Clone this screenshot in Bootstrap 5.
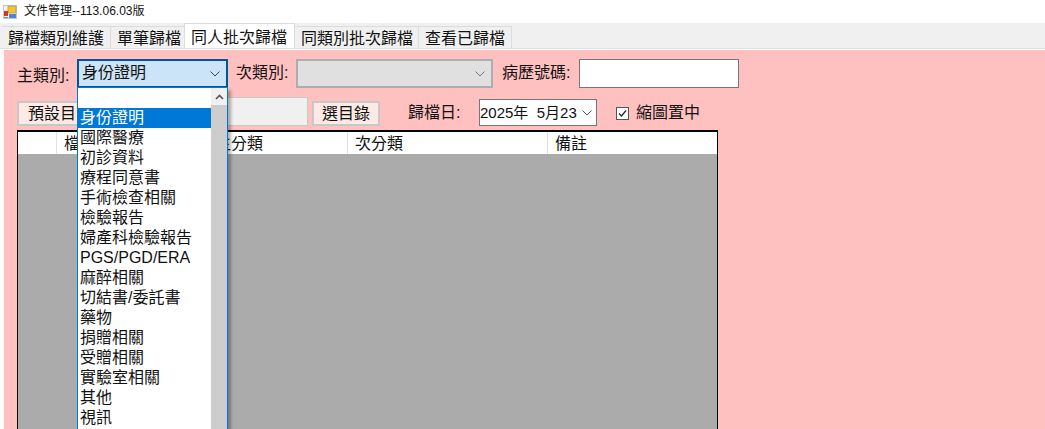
<!DOCTYPE html>
<html lang="zh-Hant"><head><meta charset="utf-8"><title>文件管理</title>
<link href="https://cdn.jsdelivr.net/npm/bootstrap@5.3.0/dist/css/bootstrap.min.css" rel="stylesheet">
<style>
html,body{width:1045px;height:429px;overflow:hidden;background:#fff}
body{font-family:"Liberation Sans","Noto Sans CJK TC",sans-serif;font-size:16px;color:#111;line-height:20px;position:relative}
.win-title{height:23px;padding-left:3px;font-size:12px;gap:7px;line-height:23px}
.tab-strip{height:26px;background:#f0f0f0;padding-left:2px;border-bottom:1px solid #e2e2e2}
.tab-x{height:22px;margin-top:3px;padding:0 6px 0 6px;font-size:16px;line-height:24px;border:1px solid #dcdcdc;border-bottom:0;border-left:0;white-space:nowrap;background:#f0f0f0}
.tab-x.on{height:25px;margin-top:0;margin-left:-4px;background:#fff;padding:3px 7px 0 6px;line-height:21px;border-left:1px solid #dcdcdc;position:relative}
.tab-n{padding-right:5px}
.pane-x{margin-left:4px;height:380px;background:#ffc0c0;padding-left:13px;border-top:1px solid #fff}
.r1{height:29px;margin-top:9px}
.lbl{white-space:nowrap}
.lbl-a{width:51px;line-height:34px}
.lbl-b{width:52px;margin-left:8px;line-height:27px}
.lbl-c{width:68px;line-height:28px}
.combo{height:29px;border:1px solid #7a7a7a;position:relative;padding-left:4px;font-size:16px}
.combo.focus{width:151px;margin-left:9px;background:#cce4f7;border:2px solid #005499;line-height:24px;padding-left:3px}
.combo.off{width:197px;margin:0 9px 0 8px;background:#e0e0e0;border:2px solid #adadad}
.chev{position:absolute;right:6px;top:50%;margin-top:-3px}
.inp{width:160px;height:29px;margin-left:9px;background:#fff;border:1px solid #767676}
.r2{height:29px;margin-top:9px}
.btn-x{height:25px;margin-top:4px;background:#fdeae6;border:2px solid #c8c8c8;border-radius:0;padding:0;font-size:16px;line-height:18px;color:#111;text-align:center}
.b1{width:70px}
.tbx{width:221px;height:29px;background:#f0f0f0;border:1px solid #c8c8c8}
.b2{width:68px;margin-left:4px}
.date-l{margin-left:28px;width:71px;line-height:32px}
.date-x{width:118px;height:27px;margin-top:2px;background:#fff;border:1px solid #767676;font-size:15px;line-height:26px;padding-left:0;position:relative;white-space:pre}
.date-x .chev{right:4px}
.chk{margin-left:19px;width:13px;height:13px;border:1px solid #555;background:#fff;margin-top:10px}
.chk-l{margin-left:7px;font-size:16px;line-height:32px;color:#111}
.dgrid{margin-top:4px;width:701px;height:300px;border:2px solid #000;border-left-width:1px;border-right-width:1px;border-bottom:0;background:#ababab}
.dhead{height:22px;background:#fff;font-size:16px;line-height:24px}
.dc{border-right:1px solid #e0e0e0;padding-left:7px;white-space:nowrap}
.dropx{position:absolute;left:77px;top:87px;width:151px;height:345px;background:#fff;border:1px solid #0078d7;border-bottom:0;font-size:16px;display:flex;box-shadow:3px 3px 3px rgba(0,0,0,.3)}
.dlist{width:133px}
.ditem{height:20px;line-height:20px;padding-left:2px;white-space:nowrap;color:#111}
.ditem.sel{background:#0078d7;color:#fff}
.dscroll{width:16px;background:#cdcdcd}
.dup{height:17px;background:#f0f0f0;display:flex;align-items:center;justify-content:center}
</style></head>
<body>
<div class="win-title d-flex align-items-center">
<svg width="14" height="14" viewBox="0 0 14 14"><rect x=".5" y=".5" width="13" height="13" fill="#f4f0e4" stroke="#c8c8c8"/><rect x="5" y="1" width="8" height="7" fill="#f2c438" stroke="#b08a30" stroke-width=".6"/><rect x="1" y="6" width="4" height="5" fill="#d8352a"/><rect x="6" y="9" width="7" height="4" fill="#4a86e0"/><rect x="1" y="12" width="4" height="1" fill="#888"/></svg>
<span>文件管理--113.06.03版</span></div>
<div class="tab-strip d-flex">
<div class="tab-x">歸檔類別維護</div><div class="tab-x">單筆歸檔</div><div class="tab-x on">同人批次歸檔</div><div class="tab-x tab-n">同類別批次歸檔</div><div class="tab-x">查看已歸檔</div>
</div>
<div class="pane-x">
<div class="r1 d-flex">
<span class="lbl lbl-a">主類別:</span>
<div class="combo focus">身份證明<svg class="chev" width="10" height="6" viewBox="0 0 10 6"><path d="M.5.5 5 5 9.5.5" fill="none" stroke="#444"/></svg></div>
<span class="lbl lbl-b">次類別:</span>
<div class="combo off"><svg class="chev" width="10" height="6" viewBox="0 0 10 6"><path d="M.5.5 5 5 9.5.5" fill="none" stroke="#777"/></svg></div>
<span class="lbl lbl-c">病歷號碼:</span>
<div class="inp"></div>
</div>
<div class="r2 d-flex">
<button class="btn-x b1" type="button">預設目</button>
<div class="tbx"></div>
<button class="btn-x b2" type="button">選目錄</button>
<span class="date-l">歸檔日:</span>
<div class="date-x">2025年  5月23<svg class="chev" width="10" height="6" viewBox="0 0 10 6"><path d="M.5.5 5 5 9.5.5" fill="none" stroke="#555"/></svg></div>
<div class="chk d-flex align-items-center justify-content-center"><svg width="11" height="11" viewBox="0 0 11 11"><path d="M2 5.5 4.5 8 9 2.5" fill="none" stroke="#222" stroke-width="1.2"/></svg></div>
<span class="chk-l">縮圖置中</span>
</div>
<div class="dgrid">
<div class="dhead d-flex">
<div class="dc" style="width:39px"></div><div class="dc" style="width:151px">檔</div><div class="dc" style="width:140px">主分類</div><div class="dc" style="width:200px">次分類</div><div class="dc border-0">備註</div>
</div></div>
</div>
<div class="dropx">
<div class="dlist">
<div class="ditem"></div>
<div class="ditem sel">身份證明</div>
<div class="ditem">國際醫療</div>
<div class="ditem">初診資料</div>
<div class="ditem">療程同意書</div>
<div class="ditem">手術檢查相關</div>
<div class="ditem">檢驗報告</div>
<div class="ditem">婦產科檢驗報告</div>
<div class="ditem">PGS/PGD/ERA</div>
<div class="ditem">麻醉相關</div>
<div class="ditem">切結書/委託書</div>
<div class="ditem">藥物</div>
<div class="ditem">捐贈相關</div>
<div class="ditem">受贈相關</div>
<div class="ditem">實驗室相關</div>
<div class="ditem">其他</div>
<div class="ditem">視訊</div>
</div>
<div class="dscroll"><div class="dup"><svg width="9" height="6" viewBox="0 0 9 6"><path d="M1 5 4.5 1.5 8 5" fill="none" stroke="#555" stroke-width="1.6"/></svg></div></div>
</div>
<script src="https://cdn.jsdelivr.net/npm/bootstrap@5.3.0/dist/js/bootstrap.bundle.min.js"></script>
</body></html>
